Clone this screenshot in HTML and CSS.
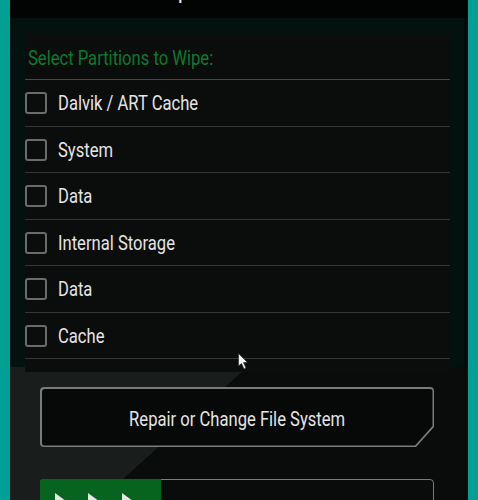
FILE: index.html
```html
<!DOCTYPE html>
<html>
<head>
<meta charset="utf-8">
<link rel="stylesheet" href="styles.css">
</head>
<body>
<div class="frame">
  <div class="topbar"><span class="top-title">Wipe</span></div>
  <div class="area">
    <div class="panel">
      <div class="panel-head"><span class="cond">Select Partitions to Wipe:</span></div>
      <div class="row"><span class="box"></span><span class="label cond">Dalvik / ART Cache</span></div>
      <div class="row"><span class="box"></span><span class="label cond">System</span></div>
      <div class="row"><span class="box"></span><span class="label cond">Data</span></div>
      <div class="row"><span class="box"></span><span class="label cond">Internal Storage</span></div>
      <div class="row"><span class="box"></span><span class="label cond">Data</span></div>
      <div class="row"><span class="box"></span><span class="label cond">Cache</span></div>
    </div>
  </div>
  <div class="btn-outer"><div class="btn-inner"><span class="cond center">Repair or Change File System</span></div></div>
  <div class="slider">
    <div class="slider-thumb">
      <svg width="121" height="30" viewBox="0 0 121 30">
        <polygon points="15,13 30,24 15,35" fill="#e8e8e8"/>
        <polygon points="48,13 63,24 48,35" fill="#e8e8e8"/>
        <polygon points="82,13 97,24 82,35" fill="#e8e8e8"/>
      </svg>
    </div>
  </div>
  <svg class="cursor" width="12" height="18" viewBox="0 0 12 18">
    <polygon points="0.5,0.5 0.5,13 3.5,10.5 6,16 8,15 5.5,9.5 9.5,9.5" fill="#f2f2f2" stroke="#222" stroke-width="0.6"/>
  </svg>
</div>
</body>
</html>
```
FILE: styles.css
```css
html, body {
  margin: 0;
  padding: 0;
  background: #00a194;
  width: 478px;
  height: 500px;
  overflow: hidden;
}

.frame {
  position: relative;
  margin: 0 10px;
  height: 500px;
  overflow: hidden;
  display: flex;
  flex-direction: column;
  background: linear-gradient(138deg, #191d1c 431px, #0a0c0c 432px);
  font-family: Roboto, "Noto Sans", sans-serif;
}

.topbar {
  height: 18px;
  background: #020404;
  overflow: hidden;
  flex: none;
}

.top-title {
  display: block;
  margin: -19px 0 0 143px;
  color: #e6e6e6;
  font-size: 22px;
  line-height: 20px;
}

.cond {
  display: inline-block;
  font-size: 20px;
  line-height: 22px;
  transform: scaleX(0.83);
  transform-origin: left center;
  white-space: nowrap;
}

.cond.center {
  transform-origin: center center;
}

.area {
  flex: none;
  height: 349px;
  padding: 15px 14px 0 15px;
  box-sizing: border-box;
  background: #03120f;
  border-right: 4px solid #060909;
}

.panel {
  background: #0b0c0c;
  height: 339px;
}

.panel-head {
  height: 47px;
  border-bottom: 1.5px solid #0c6e26;
  box-sizing: border-box;
  padding: 14px 0 0 3px;
  color: #0d7a2c;
}

.row {
  height: 46.5px;
  box-sizing: border-box;
  border-bottom: 1.5px solid #353636;
  display: flex;
  align-items: center;
  gap: 11px;
  padding-top: 1px;
}

.box {
  width: 22px;
  height: 22px;
  box-sizing: border-box;
  border: 2px solid #6b6b6b;
  border-radius: 3px;
  flex: none;
}

.label {
  color: #e4e4e4;
}

.btn-outer {
  flex: none;
  margin: 20px 0 0 30px;
  width: 394px;
  height: 60px;
  padding: 1.5px;
  box-sizing: border-box;
  background: #7a7c7c;
  border-radius: 4px;
  clip-path: polygon(0 0, 100% 0, 100% calc(100% - 20px), calc(100% - 18px) 100%, 0 100%);
}

.btn-inner {
  height: 100%;
  box-sizing: border-box;
  padding-top: 3px;
  background: #070909;
  border-radius: 3px;
  clip-path: polygon(0 0, 100% 0, 100% calc(100% - 19.4px), calc(100% - 17.4px) 100%, 0 100%);
  display: flex;
  align-items: center;
  justify-content: center;
  color: #e4e4e4;
}

.slider {
  flex: none;
  margin: 32px 0 0 30px;
  width: 394px;
  height: 40px;
  box-sizing: border-box;
  border: 1.5px solid #7a7c7c;
  border-radius: 4px;
  background: #0a0c0c;
}

.slider-thumb {
  width: 121px;
  height: 100%;
  background: #07641f;
  border-radius: 3px 0 0 3px;
  margin: -1.5px 0 0 -1.5px;
  padding-top: 1.5px;
}

.slider-thumb svg {
  display: block;
}

.cursor {
  position: absolute;
  left: 228px;
  top: 353px;
}
```
